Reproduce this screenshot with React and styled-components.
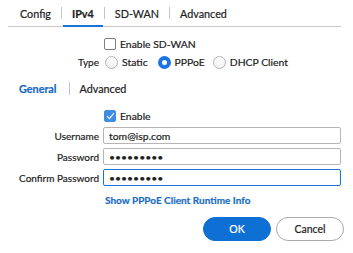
import React from 'react'
import styled, { createGlobalStyle } from 'styled-components'

const GlobalStyle = createGlobalStyle`
  body {
    margin: 0;
    background: #fff;
    font-family: Lato, 'Open Sans', sans-serif;
    color: #222;
    -webkit-text-stroke: 0.2px currentColor;
  }
`

const Page = styled.div`
  width: 353px;
  height: 253px;
  box-sizing: border-box;
  display: flex;
  flex-direction: column;
`

const TabBar = styled.div`
  display: flex;
  align-items: stretch;
  height: 26px;
  margin: 0 12px 0 8px;
  padding-left: 3px;
  border-bottom: 1px solid #c9c9c9;
`

const Tab = styled.div`
  display: flex;
  align-items: center;
  padding: 0 9px;
  font-size: 10.8px;
  font-weight: ${(props) => (props.active ? 700 : 400)};
  color: #222;
  box-shadow: ${(props) => (props.active ? 'inset 0 -2px 0 #1473d6' : 'none')};
  margin-bottom: -1px;
`

const TabDivider = styled.div`
  width: 1px;
  height: 12px;
  align-self: center;
  background: #c4c4c4;
  margin: 0 1px;
`

const Form = styled.div`
  display: grid;
  grid-template-columns: 99px 238px;
  column-gap: 4px;
  row-gap: ${(props) => props.gap || 0}px;
  align-items: center;
  margin-top: ${(props) => props.mt || 0}px;
`

const Label = styled.div`
  font-size: 10px;
  text-align: right;
  color: #222;
`

const Field = styled.div`
  display: flex;
  align-items: center;
  height: ${(props) => props.h || 18}px;
  margin-top: ${(props) => props.mt || 0}px;
`

const CheckBox = styled.span`
  width: 12px;
  height: 12px;
  box-sizing: border-box;
  border-radius: 2px;
  border: 1px solid ${(props) => (props.checked ? '#3f8de0' : '#7d7d7d')};
  background: ${(props) => (props.checked ? '#3f8de0' : '#fff')};
  display: inline-flex;
  align-items: center;
  justify-content: center;
  margin: 0 4px 0 1px;
`

const OptionText = styled.span`
  font-size: 10.4px;
  color: #222;
  margin-right: ${(props) => props.mr || 0}px;
`

const Radio = styled.span`
  width: 13px;
  height: 13px;
  box-sizing: border-box;
  border-radius: 50%;
  border: ${(props) => (props.checked ? '4.5px solid #1b74e4' : '1px solid #b3b3b3')};
  background: ${(props) => (props.checked ? '#fff' : 'linear-gradient(#fff, #f1f1f1)')};
  margin: 0 4px 0 2px;
`

const SubTabs = styled.div`
  display: flex;
  align-items: center;
  height: 14px;
  margin: 10px 0 0 19px;
`

const SubTab = styled.div`
  font-size: 10.8px;
  font-weight: ${(props) => (props.active ? 700 : 400)};
  color: ${(props) => (props.active ? '#1768c2' : '#222')};
`

const SubDivider = styled.div`
  width: 1px;
  height: 13px;
  background: #c4c4c4;
  margin: 0 10px 0 12px;
`

const TextInput = styled.input`
  width: 238px;
  height: 17px;
  box-sizing: border-box;
  border: 1px solid ${(props) => (props.focused ? '#1a73d8' : '#b5b5b5')};
  border-radius: 2px;
  padding: 0 5px;
  font-family: Lato, sans-serif;
  font-size: 10.4px;
  color: #1e1e1e;
  outline: none;
  -webkit-text-stroke: 0.2px currentColor;
`

const Link = styled.a`
  font-size: 10px;
  font-weight: 700;
  color: #1a6cc4;
  text-decoration: none;
  margin-left: 2px;
`

const Buttons = styled.div`
  display: flex;
  justify-content: flex-end;
  gap: 5px;
  margin: 8px 9px 0 0;
`

const Button = styled.button`
  width: 68px;
  height: 24px;
  border-radius: 12px;
  font-family: Lato, sans-serif;
  font-size: 10.5px;
  box-sizing: border-box;
  border: 1px solid ${(props) => (props.primary ? '#0e70d4' : '#a9a9a9')};
  background: ${(props) => (props.primary ? '#0e70d4' : '#fff')};
  color: ${(props) => (props.primary ? '#fff' : '#1e1e1e')};
  -webkit-text-stroke: 0.2px currentColor;
`

const Check = () => (
  <svg width="9" height="8" viewBox="0 0 9 8">
    <path d="M1 4.2 L3.4 6.6 L8 1" fill="none" stroke="#fff" strokeWidth="1.1" />
  </svg>
)

export default function App() {
  return (
    <Page>
      <GlobalStyle />
      <TabBar>
        <Tab>Config</Tab>
        <TabDivider />
        <Tab active>IPv4</Tab>
        <TabDivider />
        <Tab>SD-WAN</Tab>
        <TabDivider />
        <Tab>Advanced</Tab>
      </TabBar>

      <Form mt={8}>
        <div />
        <Field>
          <CheckBox />
          <OptionText>Enable SD-WAN</OptionText>
        </Field>
        <Label>Type</Label>
        <Field>
          <Radio />
          <OptionText mr={8}>Static</OptionText>
          <Radio checked />
          <OptionText mr={6}>PPPoE</OptionText>
          <Radio />
          <OptionText>DHCP Client</OptionText>
        </Field>
      </Form>

      <SubTabs>
        <SubTab active>General</SubTab>
        <SubDivider />
        <SubTab>Advanced</SubTab>
      </SubTabs>

      <Form mt={14} gap={4}>
        <div />
        <Field h={14}>
          <CheckBox checked>
            <Check />
          </CheckBox>
          <OptionText>Enable</OptionText>
        </Field>
        <Label>Username</Label>
        <Field h={17}>
          <TextInput readOnly value="tom@isp.com" />
        </Field>
        <Label>Password</Label>
        <Field h={17}>
          <TextInput readOnly type="password" value="123456789" />
        </Field>
        <Label>Confirm Password</Label>
        <Field h={17}>
          <TextInput readOnly focused type="password" value="123456789" />
        </Field>
        <div />
        <Field h={18} mt={1}>
          <Link href="#">Show PPPoE Client Runtime Info</Link>
        </Field>
      </Form>

      <Buttons>
        <Button primary>OK</Button>
        <Button>Cancel</Button>
      </Buttons>
    </Page>
  )
}
